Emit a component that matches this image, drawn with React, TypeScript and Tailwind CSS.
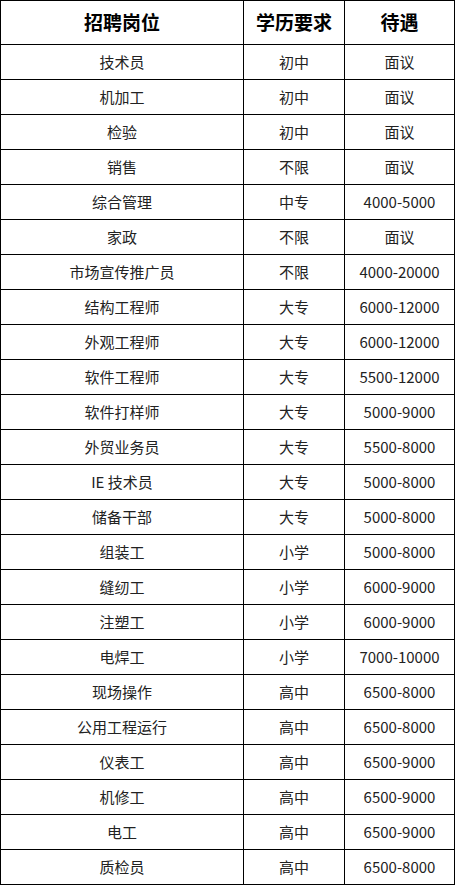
const rows: [string, string, string][] = [
  ["技术员", "初中", "面议"],
  ["机加工", "初中", "面议"],
  ["检验", "初中", "面议"],
  ["销售", "不限", "面议"],
  ["综合管理", "中专", "4000-5000"],
  ["家政", "不限", "面议"],
  ["市场宣传推广员", "不限", "4000-20000"],
  ["结构工程师", "大专", "6000-12000"],
  ["外观工程师", "大专", "6000-12000"],
  ["软件工程师", "大专", "5500-12000"],
  ["软件打样师", "大专", "5000-9000"],
  ["外贸业务员", "大专", "5500-8000"],
  ["IE 技术员", "大专", "5000-8000"],
  ["储备干部", "大专", "5000-8000"],
  ["组装工", "小学", "5000-8000"],
  ["缝纫工", "小学", "6000-9000"],
  ["注塑工", "小学", "6000-9000"],
  ["电焊工", "小学", "7000-10000"],
  ["现场操作", "高中", "6500-8000"],
  ["公用工程运行", "高中", "6500-8000"],
  ["仪表工", "高中", "6500-9000"],
  ["机修工", "高中", "6500-9000"],
  ["电工", "高中", "6500-9000"],
  ["质检员", "高中", "6500-8000"],
];

const cell = "flex items-center justify-center border-r border-b border-black";

export default function App() {
  return (
    <div
      className="w-[455px] bg-white border-l border-t border-black text-[#222]"
      style={{ fontFamily: '"Noto Sans CJK SC", "Noto Sans", sans-serif' }}
    >
      {/* header */}
      <div className="flex h-[44px] text-[19px] font-bold text-black">
        <div className={cn(cell, "w-[243px]")}>招聘岗位</div>
        <div className={cn(cell, "w-[101px]")}>学历要求</div>
        <div className={cn(cell, "w-[110px]")}>待遇</div>
      </div>
      {rows.map(([job, edu, pay]) => (
        <div key={job} className="flex h-[35px] text-[15px]">
          <div className={cn(cell, "w-[243px]")}>{job}</div>
          <div className={cn(cell, "w-[101px]")}>{edu}</div>
          <div className={cn(cell, "w-[110px]")}>{pay}</div>
        </div>
      ))}
    </div>
  );
}

function cn(...c: string[]) {
  return c.join(" ");
}
